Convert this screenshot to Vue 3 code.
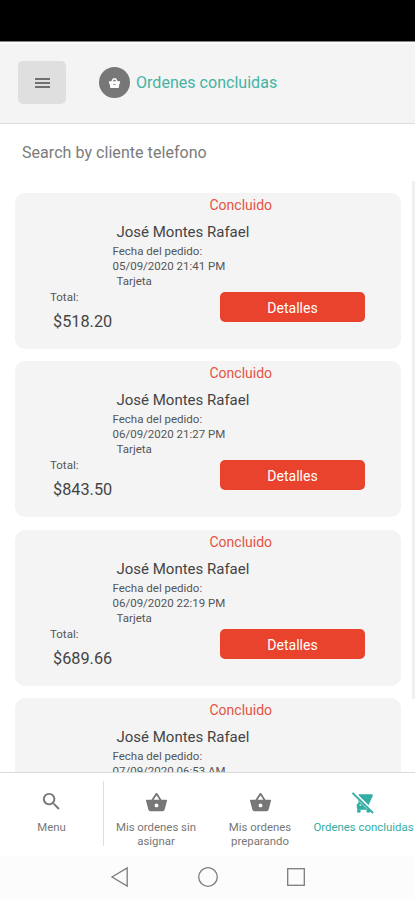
<script setup>
const orders = [
  { date: '05/09/2020 21:41 PM', total: '$518.20' },
  { date: '06/09/2020 21:27 PM', total: '$843.50' },
  { date: '06/09/2020 22:19 PM', total: '$689.66' },
  { date: '07/09/2020 06:53 AM', total: '' },
]
const basket = 'M17.21 9l-4.38-6.56c-.19-.28-.51-.42-.83-.42-.32 0-.64.14-.83.43L6.79 9H2c-.55 0-1 .45-1 1 0 .09.01.18.04.27l2.54 9.27c.23.84 1 1.46 1.92 1.46h13c.92 0 1.69-.62 1.93-1.46l2.54-9.27L23 10c0-.55-.45-1-1-1h-4.79zM9 9l3-4.400L15 9H9zm3 8c-1.100 0-2-.9-2-2s.9-2 2-2 2 .9 2 2-.9 2-2 2z'
const tabs = [
  { label: 'Mis ordenes sin asignar', cls: 'first' },
  { label: 'Mis ordenes preparando', cls: 'second' },
]
</script>

<template>
  <div class="screen">
    <div class="status-bar"></div>
    <header class="header">
      <button class="menu" aria-label="Menu"><i></i><i></i><i></i></button>
      <span class="badge">
        <svg viewBox="0 0 14 12"><path d="M1 4h2.600L5.300 1h3.400l1.700 3H13v2.500h-.7l-.8 4.900h-9L1.700 6.500H1zM5.300 4h3.400L7.800 2.400H6.200z" fill="#fff" fill-rule="evenodd" /><path d="M5.800 7h2.400v1.200H5.800z" fill="#999" /></svg>
      </span>
      <h1 class="title">Ordenes concluidas</h1>
    </header>
    <main class="content">
      <div class="search">Search by cliente telefono</div>
      <div class="list">
        <section v-for="o in orders" :key="o.date" class="card">
          <div class="state">Concluido</div>
          <div class="name">José Montes Rafael</div>
          <div class="detail">Fecha del pedido:</div>
          <div class="detail date">{{ o.date }}</div>
          <template v-if="o.total">
            <div class="detail pay">Tarjeta</div>
            <div class="bottom">
              <div class="sum">
                <div class="total">Total:</div>
                <div class="price">{{ o.total }}</div>
              </div>
              <button class="details">Detalles</button>
            </div>
          </template>
        </section>
      </div>
      <div class="scrollbar"></div>
    </main>
    <nav class="tabs">
      <div class="tab search-tab">
        <svg viewBox="0 0 24 24"><path fill="currentColor" d="M15.500 14h-.79l-.28-.27C15.410 12.590 16 11.110 16 9.500 16 5.910 13.090 3 9.500 3S3 5.910 3 9.500 5.910 16 9.500 16c1.610 0 3.090-.59 4.230-1.570l.27.28v.79l5 4.990L20.490 19l-4.990-5zm-6 0C7.010 14 5 11.990 5 9.500S7.010 5 9.500 5 14 7.010 14 9.500 11.990 14 9.500 14z" /></svg>
        <span class="label">Menu</span>
      </div>
      <div v-for="t in tabs" :key="t.cls" class="tab" :class="t.cls">
        <svg viewBox="0 0 24 24"><path fill="currentColor" :d="basket" /></svg>
        <span class="label">{{ t.label }}</span>
      </div>
      <div class="tab active">
        <svg viewBox="0 0 24 24">
          <path fill="currentColor" d="M8 3.500h14.500v2L18 15.500 8 4.700z" />
          <path fill="currentColor" fill-rule="evenodd" d="M7 9l10 10v.5H7l-1-2V14l2-2zM9 14h1.500v1.500H9z" />
          <circle cx="8.200" cy="20.800" r="2" fill="currentColor" />
          <circle cx="18" cy="20.800" r="2" fill="currentColor" />
          <path d="M2.500 1.300L23.500 22" stroke="#fff" stroke-width="3" />
          <path d="M1.500 2L23 23" stroke="currentColor" stroke-width="2" />
        </svg>
        <span class="label">Ordenes concluidas</span>
      </div>
    </nav>
    <footer class="system">
      <svg viewBox="0 0 20 22"><path d="M17.200 2v18L2 11z" /></svg>
      <svg viewBox="0 0 20 22"><circle cx="10" cy="11" r="9.300" /></svg>
      <svg viewBox="0 0 20 22"><rect x="1.700" y="2.700" width="16.600" height="16.600" /></svg>
    </footer>
  </div>
</template>

<style>
body { margin: 0; background: #fff; }
</style>

<style scoped>
* { box-sizing: border-box; }
.screen { width: 415px; height: 900px; display: flex; flex-direction: column; overflow: hidden; background: #fff; font-family: Roboto, sans-serif; color: #444; }
button { border: 0; font-family: inherit; }
svg { display: block; }
.status-bar { height: 42px; flex: none; background: #000; border-bottom: 1px solid #858585; }
.header { height: 82px; flex: none; display: flex; align-items: center; padding: 0 0 2px 18px; background: #f4f4f4; border-bottom: 1px solid #dedede; border-top: 2px solid #fafafa; }
.menu { width: 48px; height: 43px; padding: 0; border-radius: 5px; background: #dfdfdf; display: flex; flex-direction: column; align-items: center; justify-content: center; gap: 2px; }
.menu i { width: 15px; height: 2px; background: #707070; }
.badge { width: 31px; height: 31px; margin-left: 33px; border-radius: 50%; background: #777; display: flex; align-items: center; justify-content: center; }
.badge svg { width: 13px; height: 12px; }
.title { margin: 0 0 0 6px; font-weight: 400; font-size: 16px; line-height: 20px; letter-spacing: .03px; color: #44b3a4; white-space: nowrap; }
.content { height: 648px; flex: none; position: relative; overflow: hidden; }
.search { padding: 19px 0 0 22px; height: 68.500px; font-size: 16px; line-height: 20px; letter-spacing: .05px; color: #7b7b7b; }
.list { display: flex; flex-direction: column; gap: 12.500px; padding: 0 14px 0 15px; }
.card { height: 156px; flex: none; padding-top: 5px; border-radius: 10px; background: #f4f4f4; }
.state { margin-left: 194.500px; font-size: 14px; line-height: 14px; color: #e55344; }
.name { margin: 11px 0 3px 101.500px; font-size: 15px; line-height: 18px; }
.detail { margin-left: 97.500px; font-size: 11.500px; line-height: 15px; color: #555; }
.detail.pay { margin-left: 101.500px; }
.bottom { display: flex; }
.sum { width: 205px; padding: 1px 0 0 35px; }
.total { font-size: 11.500px; line-height: 15px; color: #555; }
.price { margin: 7px 0 0 3px; font-size: 16.300px; line-height: 20px; }
.details { width: 145px; height: 30px; margin-top: 3px; padding: 2px 0 0; border-radius: 5px; background: #e9432d; color: #fff; font-size: 14px; line-height: 20px; }
.scrollbar { position: absolute; right: 0; top: 57px; width: 3px; height: 518px; background: #efefef; }
.tabs { height: 84px; flex: none; display: flex; border-top: 1px solid #dcdcdc; background: #fff; color: #777; }
.tab { width: 104px; flex: none; padding-top: 18px; display: flex; flex-direction: column; align-items: center; }
.tab svg { width: 23px; height: 23px; }
.search-tab { height: 65px; margin-top: 8px; padding-top: 9px; border-right: 1px solid #dedede; }
.label { margin-top: 6px; width: 94px; text-align: center; font-size: 11.400px; line-height: 14px; }
.search-tab .label { margin-top: 7px; }
.active { width: 103px; color: #34ada5; }
.active svg { margin-right: 2px; }
.active .label { width: 103px; white-space: nowrap; }
.system { height: 44px; flex: none; display: flex; justify-content: center; gap: 68px; padding-top: 10px; background: #fcfcfc; }
.system svg { width: 20px; height: 22px; fill: none; stroke: #7c7c7c; stroke-width: 1.300; }
</style>
